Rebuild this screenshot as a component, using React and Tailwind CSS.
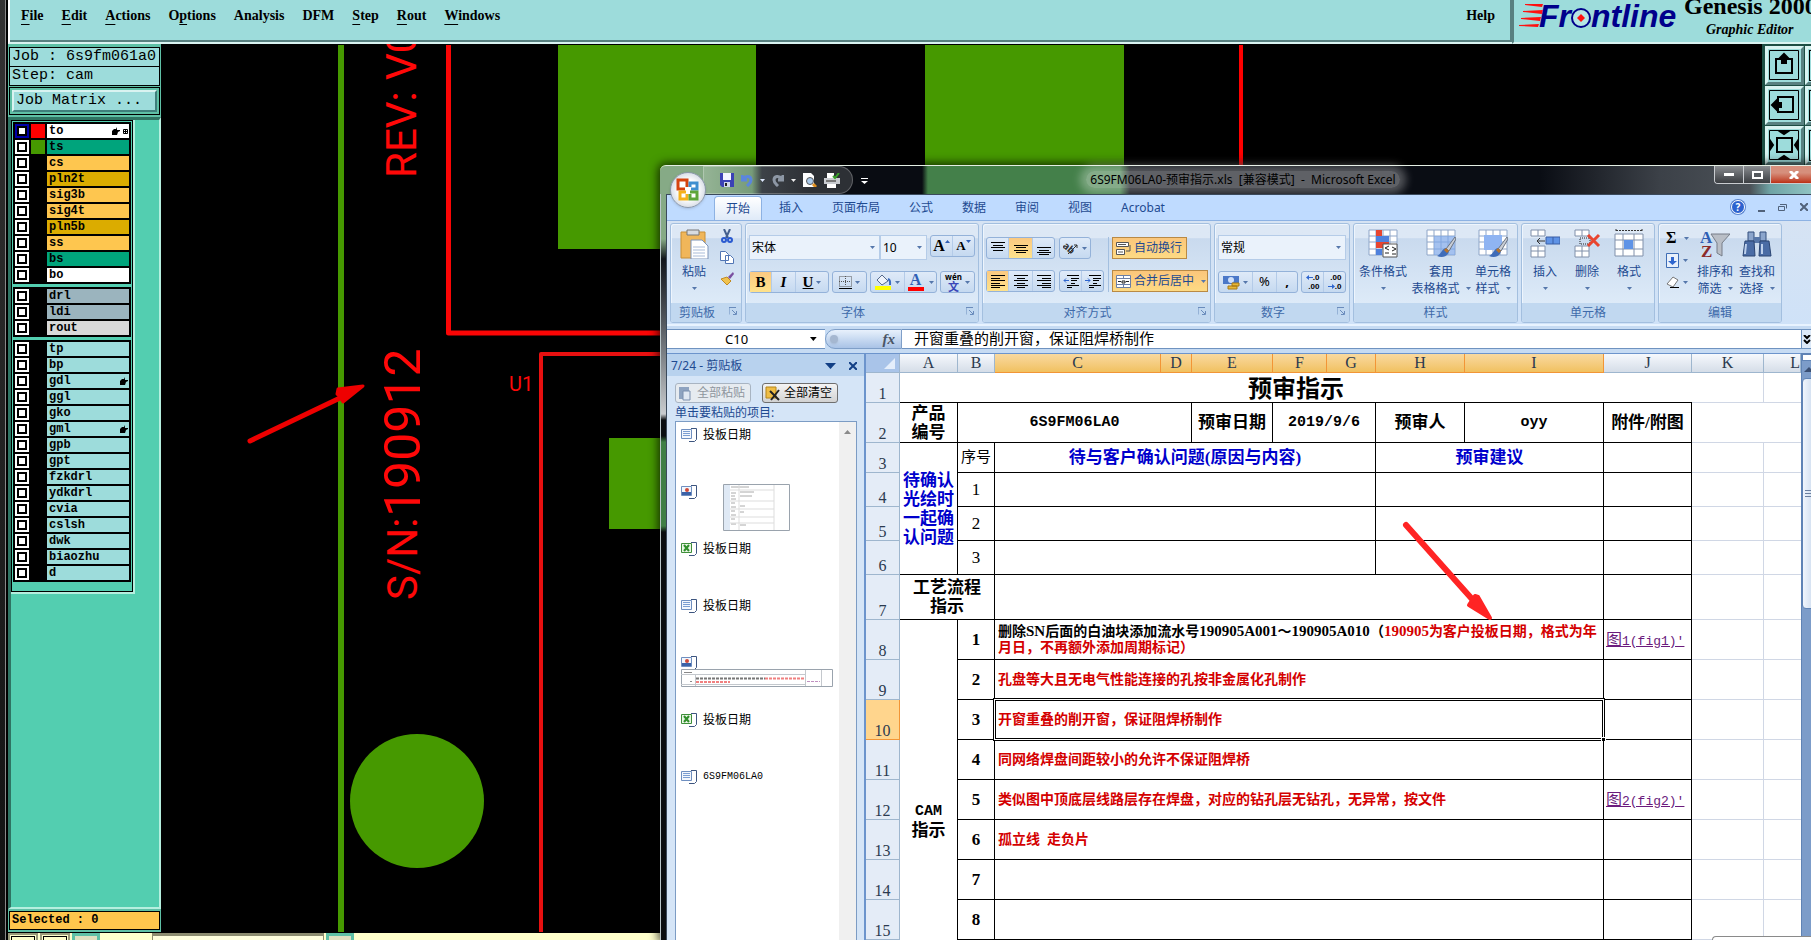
import React from "react";

const layerGroups = [
    [
        { name: "to", bg: "bg-white", swatch: "bg-[#ff0000]", active: true, hand: true, grid: true },
        { name: "ts", bg: "bg-[#00a47c]", swatch: "bg-[#469900]" },
        { name: "cs", bg: "bg-[#fec64f]" },
        { name: "pln2t", bg: "bg-[#dbac00]" },
        { name: "sig3b", bg: "bg-[#fec64f]" },
        { name: "sig4t", bg: "bg-[#fec64f]" },
        { name: "pln5b", bg: "bg-[#dbac00]" },
        { name: "ss", bg: "bg-[#fec64f]" },
        { name: "bs", bg: "bg-[#00a47c]" },
        { name: "bo", bg: "bg-white" },
    ],
    [
        { name: "drl", bg: "bg-[#9bb4be]" },
        { name: "ldi", bg: "bg-[#9bb4be]" },
        { name: "rout", bg: "bg-[#d9d9d9]" },
    ],
    [
        "tp", "bp", "gdl", "ggl", "gko", "gml", "gpb", "gpt", "fzkdrl",
        "ydkdrl", "cvia", "cslsh", "dwk", "biaozhu", "d",
    ].map((name) => ({
        name,
        bg: "bg-[#9ddcdb]",
        hand: name === "gdl" || name === "gml",
    })),
];

const menus = [
    ["", "F", "ile"],
    ["", "E", "dit"],
    ["", "A", "ctions"],
    ["O", "p", "tions"],
    ["Analysis", "", ""],
    ["DFM", "", ""],
    ["", "S", "tep"],
    ["", "R", "out"],
    ["", "W", "indows"],
];

const tabs = ["插入", "页面布局", "公式", "数据", "审阅", "视图"];

/* ---------- graphic editor ---------- */

function FrontlineLogo() {
    return (
        <svg width="165" height="32" className="shrink-0">
            <g fill="#ff1010">
                <path d="M6 4l18 0-1 3-17-2zM4 11l20-1-1 4-19-2zM2 18l20-1-1 4-19-2zM0 25l20-1-1 3-19-1z" />
            </g>
            <g
                fill="#00008b"
                fontFamily="Liberation Sans"
                fontSize="32"
                fontWeight="700"
                fontStyle="italic"
            >
                <text x="20" y="27">Fr</text>
                <text x="72" y="27">ntline</text>
            </g>
            <circle cx="62" cy="18" r="9" fill="#b5e6e4" stroke="#00008b" strokeWidth="2" />
            <path d="M62 14l4 4-4 4-4-4z" fill="#ff1010" />
        </svg>
    );
}

function EditorHeader() {
    return (
        <header className="flex h-11 shrink-0 bg-[#9ddcdb] font-['Liberation_Serif',serif] font-bold text-black">
            <nav className="flex flex-1 gap-[18px] border-l-2 border-b-2 border-l-white border-b-[#d9f3f1] shadow-[inset_-2px_-2px_0_#588080] pl-[11px] pt-[6px] pr-[17px] text-sm">
                {menus.map(([pre, key, rest]) => (
                    <a key={pre + key + rest} href="#menu" className="h-5">
                        {pre}
                        <span className="underline underline-offset-4">{key}</span>
                        {rest}
                    </a>
                ))}
                <a href="#help" className="ml-auto h-5">
                    Help
                </a>
            </nav>
            <div className="flex w-[299px] overflow-hidden border-l-2 border-b-2 border-l-[#588080] border-b-[#d9f3f1] pl-[5px]">
                <FrontlineLogo />
                <div className="-mt-2 flex w-[130px] shrink-0 flex-col whitespace-nowrap">
                    <span className="text-2xl leading-7">Genesis 2000</span>
                    <span className="pl-[22px] text-sm leading-5 italic">Graphic Editor</span>
                </div>
            </div>
        </header>
    );
}

function Hand() {
    return (
        <svg width="8" height="8" viewBox="0 0 8 8" fill="#000">
            <path d="M0 4l2-2 2 0 1-2 0 3 3 0 0 1-2 1-1 3-5 0z" />
        </svg>
    );
}

function LayerRow({ layer }) {
    return (
        <label className="flex h-[14px] gap-[2px]">
            <span
                className={
                    layer.active
                        ? "grid w-[14px] place-items-center bg-[#0000a8]"
                        : "grid w-[14px] place-items-center bg-white"
                }
            >
                <input
                    type="checkbox"
                    className="block h-[10px] w-[10px] appearance-none border-2 border-black bg-white"
                />
            </span>
            <span className={layer.swatch ? `w-[14px] ${layer.swatch}` : "w-[14px]"} />
            <span className={`flex flex-1 items-center gap-[3px] pr-px pl-[2px] leading-[14px] ${layer.bg}`}>
                <span className="flex-1">{layer.name}</span>
                {layer.hand && <Hand />}
                {layer.grid && (
                    <svg width="5" height="5" viewBox="0 0 5 5" fill="none" stroke="#000">
                        <path d="M.5 .5h4v4h-4zM2.5 0v5M0 2.5h5" />
                    </svg>
                )}
            </span>
        </label>
    );
}

function LayerPanel() {
    return (
        <aside className="flex w-[153px] shrink-0 flex-col bg-[#5fc0a6] font-['Liberation_Mono',monospace] text-black">
            <div className="mx-px mt-[3px] h-5 border border-black bg-[#9ddcdb] pl-[2px] text-[15px] leading-[18px] whitespace-pre">
                Job : 6s9fm061a0
            </div>
            <div className="mx-px -mt-px h-5 border border-black bg-[#9ddcdb] pl-[2px] text-[15px] leading-[18px]">
                Step: cam
            </div>
            <div className="mx-px mt-px flex h-7 border border-black p-[2px]">
                <button className="flex-1 border-2 border-t-[#d9f3f1] border-r-[#3f7f7c] border-b-[#3f7f7c] border-l-[#d9f3f1] bg-[#9ddcdb] pl-[2px] text-left text-[15px] leading-[18px]">
                    Job Matrix ...
                </button>
            </div>
            <div className="mt-[2px] min-h-0 flex-1 border-t-[3px] border-r-2 border-b-2 border-l-[3px] border-t-[#2f7463] border-r-[#b5efdf] border-b-[#b5efdf] border-l-[#2f7463] bg-[#53ceb0]">
                <div className="w-[124px] border-r-2 border-b-2 border-[#b5efdf]">
                    <div className="flex flex-col gap-[3px] border border-black p-px pb-[9px] text-xs font-bold">
                        {layerGroups.map((group, i) => (
                            <div key={i} className="flex flex-col gap-[2px] bg-black p-[2px]">
                                {group.map((layer) => (
                                    <LayerRow key={layer.name} layer={layer} />
                                ))}
                            </div>
                        ))}
                    </div>
                </div>
            </div>
            <div className="mx-px my-[2px] h-[19px] border border-black bg-[#ffc64d] pl-[2px] text-xs leading-4 font-bold">
                Selected : 0
            </div>
        </aside>
    );
}

function BoardView() {
    return (
        <svg className="min-w-0 flex-1 bg-black">
            {/* board coordinates start at the window corner */}
            <g transform="translate(-161 -44)">
                <rect x="338" y="45" width="6" height="900" fill="#469900" />
                <rect x="558" y="45" width="198" height="204" fill="#469900" />
                <rect x="925" y="45" width="199" height="204" fill="#469900" />
                <rect x="609" y="438" width="120" height="91" fill="#469900" />
                <circle cx="417" cy="801" r="67" fill="#469900" />
                <path d="M448.500 45V333H700" fill="none" stroke="#fb0505" strokeWidth="5" strokeLinejoin="round" />
                <path d="M541 940V354H700" fill="none" stroke="#e81010" strokeWidth="4" strokeLinejoin="round" />
                <path d="M1241 45V200" stroke="#f00" strokeWidth="4" />
                <g fill="#ff0808" fontFamily="Roboto, sans-serif" fontSize="42">
                    <text transform="translate(416 178) rotate(-90)">REV:</text>
                    <text transform="translate(416 80) rotate(-90)">V0</text>
                    <text transform="translate(417 600) rotate(-90)">S/N:</text>
                    <text fontSize="50" transform="translate(420 517) rotate(-90)">
                        190912
                    </text>
                    <text x="509" y="391" fontSize="20">U1</text>
                </g>
                <g fill="#e00" stroke="#e00" strokeLinecap="round" strokeLinejoin="round">
                    <path d="M250 441L340 398" strokeWidth="5" />
                    <path d="M363 386L338 389 337 394 340 397 343 402z" strokeWidth="3" />
                </g>
            </g>
        </svg>
    );
}

const viewIcons = [
    <g key="up">
        <path d="M11 13h16v14H11z" />
        <path d="M15 12l4-4 4 4h-2v5h-4v-5z" fill="#000" />
    </g>,
    <g key="left">
        <path d="M13 11h15v15H13z" />
        <path d="M11 15l-4 4 4 4v-2h5v-4h-5z" fill="#000" />
    </g>,
    <g key="fit">
        <path d="M12 12h15v14H12z" />
        <path d="M16 6h6l-3 2zM16 32h6l-3-2zM6 16v6l2-3zM32 16v6l-2-3z" fill="#000" />
    </g>,
];

function ViewToolbar() {
    return (
        <div className="grid w-[49px] shrink-0 grid-cols-[39px_39px] content-start gap-px overflow-hidden bg-[#1c4d43] pt-[2px] pl-[3px]">
            {viewIcons.flatMap((icon, i) => [
                <button
                    key={`a${i}`}
                    className="h-[39px] border-3 border-t-[#d9f3f1] border-r-[#588080] border-b-[#588080] border-l-[#d9f3f1] bg-[#9ddcdb]"
                >
                    <svg width="33" height="33" viewBox="3 3 33 33" fill="none" stroke="#000" strokeWidth="2">
                        <path d="M4.500 4.500h29v29h-29z" strokeWidth="1" />
                        {icon}
                    </svg>
                </button>,
                <button
                    key={`b${i}`}
                    className="h-[39px] border-3 border-t-[#d9f3f1] border-r-[#588080] border-b-[#588080] border-l-[#d9f3f1] bg-[#9ddcdb] p-px"
                >
                    <span className="block h-full border border-black" />
                </button>,
            ])}
        </div>
    );
}

function EditorFooter() {
    return (
        <footer className="flex h-2 shrink-0 items-start gap-[2px] overflow-hidden border-t border-black bg-[#ffffcc]">
            <div className="h-3 w-[30px] border-2 border-[#9a9a7a] bg-[#ffffcc] p-px">
                <div className="h-2 border border-black" />
            </div>
            <div className="h-3 w-[30px] border-2 border-[#9a9a7a] bg-[#ffffcc] p-px">
                <div className="h-2 border border-black" />
            </div>
            <div className="h-3 w-7 border-3 border-[#5fc0a6] bg-[#e0e0c0]" />
            <div className="w-12" />
            <div className="h-3 w-[172px] border-x border-t-3 border-[#8c8c70] bg-[#ffffdd]" />
            <div className="h-3 w-7 border-3 border-[#5fc0a6] bg-[#e0e0c0]" />
        </footer>
    );
}

/* ---------- spreadsheet window ---------- */

function Arrow() {
    return (
        <svg width="5" height="3" viewBox="0 0 5 3" fill="#5577ab" className="shrink-0">
            <path d="M0 0h5L2.500 3z" />
        </svg>
    );
}

function OfficeButton() {
    return (
        <button
            aria-label="Office"
            className="absolute top-[7px] left-[10px] grid h-9 w-9 place-items-center rounded-full border border-[#8b98ab] bg-radial from-white from-40% to-[#b9c3d3] shadow"
        >
            <svg width="24" height="24" viewBox="0 0 24 24" fill="none" strokeWidth="3">
                <path d="M11 9V2H2v9h7" stroke="#d6430f" />
                <path d="M14 9V5h7v6h-6" stroke="#3f8fd0" />
                <path d="M10 14H4v7h7v-5" stroke="#f5b21c" />
                <path d="M14 14h7v7h-7v-5" stroke="#5ea63a" />
            </svg>
        </button>
    );
}

function TitleBar() {
    return (
        <div className="flex h-[29px] shrink-0 items-start rounded-tl-md border-t border-[#e4efe4] bg-[linear-gradient(90deg,#86aa86_0,#86aa86_40px,#5f8a62_92px,#1b2128_102px,#090c12_150px,#090c12_262px,#44804a_268px,#44804a_460px,#0a0d14_470px,#0a0d14_880px,#3c4148_1000px,#4b5157_1090px,#6fa3a5_1110px,#8fc2c2_1151px)]">
            <div className="ml-[43px] flex h-7 w-[150px] items-center gap-[7px] rounded-r-full border border-white/25 bg-white/15 pl-4">
                <svg width="14" height="14" viewBox="0 0 14 14">
                    <path d="M0 0h14v14H2L0 12z" fill="#3b41b5" />
                    <path d="M3 0h8v7H3z" fill="#f2f4ff" />
                    <path d="M4 9h6v5H4z" fill="#cfd4ee" />
                    <path d="M5 10h2v3H5z" fill="#222" />
                </svg>
                <svg width="12" height="13" viewBox="0 0 12 13" fill="none" stroke="#5b86dd" strokeWidth="3">
                    <path d="M1 1v5h5M2 5c3-4 8-3 8 1 0 3-2 4-4 6" />
                </svg>
                <svg width="5" height="3" viewBox="0 0 5 3" fill="#dfe9ff"><path d="M0 0h5L2.500 3z" /></svg>
                <svg width="12" height="13" viewBox="0 0 12 13" fill="none" stroke="#8d97a5" strokeWidth="3">
                    <path d="M11 1v5H6M10 5C7 1 2 2 2 6c0 3 2 4 4 6" />
                </svg>
                <svg width="5" height="3" viewBox="0 0 5 3" fill="#eee"><path d="M0 0h5L2.500 3z" /></svg>
                <svg width="14" height="14" viewBox="0 0 14 14">
                    <path d="M0 0h8l3 3v11H0z" fill="#fff" />
                    <circle cx="7" cy="8" r="3.500" fill="#a9c9ea" stroke="#555" />
                    <path d="M10 11l3 3" stroke="#e09020" strokeWidth="3" />
                </svg>
                <svg width="16" height="15" viewBox="0 0 16 15">
                    <path d="M3 0h7v5H3zM3 10h9v5H3z" fill="#fff" />
                    <path d="M0 5h16v6H0z" fill="#c9ccd1" />
                    <path d="M2 7h10v2H2z" fill="#777" />
                    <path d="M9 3l2 2 4-5" stroke="#37a028" strokeWidth="2" fill="none" />
                </svg>
            </div>
            <svg width="7" height="7" viewBox="0 0 7 7" className="mt-3 ml-2" fill="#fff">
                <path d="M0 0h7v1H0zM0 3h7L3.500 6z" />
            </svg>
            <div className="flex-1 pr-24 text-center">
                <span className="rounded-full bg-white/35 px-1 text-xs leading-7 whitespace-pre text-black shadow-[0_0_8px_6px_rgb(255_255_255/0.3)]">
                    6S9FM06LA0-预审指示.xls  [兼容模式]  -  Microsoft Excel
                </span>
            </div>
            <div className="flex h-[18px] w-[97px] shrink-0 overflow-hidden rounded-bl border-b border-l border-[#c9ccd0]">
                <button aria-label="最小化" className="grid w-[29px] place-items-center border-r border-[#c9ccd0] bg-linear-to-b from-[#8a8d91] to-[#3b3e42]">
                    <span className="h-[3px] w-[10px] bg-white" />
                </button>
                <button aria-label="最大化" className="grid w-[27px] place-items-center border-r border-[#c9ccd0] bg-linear-to-b from-[#8a8d91] to-[#3b3e42]">
                    <span className="h-2 w-[11px] border-2 border-white bg-[#55595e]" />
                </button>
                <button aria-label="关闭" className="flex-1 bg-linear-to-b from-[#d68f7c] from-40% to-[#bb2e12] pl-[18px]">
                    <svg width="10" height="8" viewBox="0 0 10 8" className="stroke-white" strokeWidth="3">
                        <path d="M1 0l8 8M9 0L1 8" />
                    </svg>
                </button>
            </div>
        </div>
    );
}

function TabStrip() {
    return (
        <div className="flex h-[26px] shrink-0 items-end border-t border-[#3b4a5c] bg-[#bfdbff] pr-[3px] text-xs text-[#1e4a91]">
            <button className="ml-[47px] h-6 w-12 rounded-t border border-b-0 border-[#8db2e3] bg-linear-to-b from-white to-[#dfeaf8]">
                开始
            </button>
            <div className="ml-[17px] flex h-6 items-center gap-[29px]">
                {tabs.map((tab) => (
                    <button key={tab}>{tab}</button>
                ))}
                <button>Acrobat</button>
            </div>
            <div className="ml-auto flex h-[26px] items-center gap-[13px] text-[#51627a]">
                <span className="grid h-[14px] w-[14px] place-items-center rounded-full border border-white bg-[#2c62cf] text-[10px] leading-3 font-bold text-white ring-1 ring-[#5a84cf]">
                    ?
                </span>
                <span className="mt-2 h-[2px] w-[7px] bg-[#51627a]" />
                <svg width="9" height="7" viewBox="0 0 9 7" fill="none" stroke="currentColor">
                    <path d="M.5 2.500h6v4h-6zM2 .5h6.500v4" />
                </svg>
                <svg width="8" height="8" viewBox="0 0 8 8" stroke="currentColor" strokeWidth="2">
                    <path d="M0 0l8 8M8 0L0 8" />
                </svg>
            </div>
        </div>
    );
}

function Group({ label, className, launcher, children }) {
    return (
        <section
            className={`flex shrink-0 flex-col overflow-hidden rounded-[3px] border border-[#a3bfdf] bg-linear-to-b from-[#dde8f5] from-14% via-[#c9daee] via-15% to-[#e3effb] shadow-[inset_1px_1px_0_#eef5fd] ${className}`}
        >
            <div className="min-h-0 flex-1">{children}</div>
            <div className="flex h-[19px] items-center bg-[#c1d8f0] pt-px text-xs text-[#3e6aaa]">
                <span className={launcher ? "flex-1 pr-[6px] text-center" : "flex-1 text-center"}>{label}</span>
                {launcher && (
                    <svg width="8" height="8" viewBox="0 0 8 8" fill="none" stroke="#6a8cbc" className="mr-1 mb-1">
                        <path d="M0 7.500V.5h7M3 3l4 4M7.500 4v3.500H4" />
                    </svg>
                )}
            </div>
        </section>
    );
}

function Cluster({ className = "", children }) {
    return (
        <div
            className={`flex h-[22px] rounded-[3px] border border-[#94b2d9] bg-linear-to-b from-[#dfeaf8] to-[#c5d9f0] ${className}`}
        >
            {children}
        </div>
    );
}

function Tool({ on, label, className = "w-6", children }) {
    return (
        <button
            aria-label={label}
            className={[
                "flex items-center justify-center gap-[3px] border-r border-[#b4cbe8] text-black last:border-r-0",
                on && "bg-linear-to-b from-[#fbc981] to-[#fee28b]",
                className,
            ]
                .filter(Boolean)
                .join(" ")}
        >
            {children}
        </button>
    );
}

function Lines({ d }) {
    return (
        <svg width="16" height="13" viewBox="0 0 16 13" stroke="#000" strokeWidth="1">
            <path d={d} />
        </svg>
    );
}

const alignTop = "M1 .5h14M3 3.500h10M1 5.500h14M3 8.500h10";
const alignMiddle = "M1 3.500h14M3 5.500h10M1 8.500h14M3 10.500h10";
const alignBottom = "M1 5.500h14M3 8.500h10M1 10.500h14M3 12.500h10";
const alignLeft = "M1 .5h14M1 3.500h9M1 5.500h14M1 8.500h9M1 10.500h14M1 12.500h9";
const alignCenter = "M1 .5h14M4 3.500h8M1 5.500h14M4 8.500h8M1 10.500h14M4 12.500h8";
const alignRight = "M1 .5h14M6 3.500h9M1 5.500h14M6 8.500h9M1 10.500h14M6 12.500h9";

function Combo({ value, label, className }) {
    return (
        <label className={`flex h-[25px] items-center border border-[#b5cce8] bg-[#eaf2fb] pr-1 ${className}`}>
            <select aria-label={label} className="h-full min-w-0 flex-1 appearance-none pl-[2px] text-xs text-black">
                <option>{value}</option>
            </select>
            <Arrow />
        </label>
    );
}

function BigButton({ icon, lines, className = "w-[42px]" }) {
    return (
        <button className={`flex flex-col items-center text-xs leading-[17px] whitespace-nowrap text-[#1e4a91] ${className}`}>
            <svg width="30" height="30" viewBox="0 0 30 30" className="mb-1">
                {icon}
            </svg>
            <span>{lines[0]}</span>
            <span className="flex h-[17px] items-center gap-[6px]">
                {lines[1]}
                <Arrow />
            </span>
        </button>
    );
}

const sheetGrid = (
    <path d="M1 1h28v25H1zM1 7h28M1 13h28M1 20h28M8 1v25M15 1v25M22 1v25" fill="#fff" stroke="#8fa6c8" />
);
const brush = (
    <>
        <path d="M29 8l-9 12 3 2 7-12z" fill="#c9ced6" stroke="#6a7482" />
        <path d="M20 19c-5 1-4 6-9 8 5 2 11 1 12-5z" fill="#3f6cb8" />
        <path d="M19 20l3 3" stroke="#b8742a" strokeWidth="3" />
    </>
);
const icons = {
    conditional: (
        <>
            {sheetGrid}
            <path d="M8 1h6v6H8zM8 13h13v6H8z" fill="#e8452f" />
            <path d="M8 7h13v6H8zM8 20h6v6H8z" fill="#4f81dd" />
            <path d="M15 15h14v13H15z" fill="#fff" stroke="#555" />
            <path d="M21 17l-4 2 4 2M17 24h4M24 18l4 2-4 2M24 25h4" stroke="#222" fill="none" />
        </>
    ),
    tableFormat: (
        <>
            {sheetGrid}
            <path d="M8 7h21v19H8z" fill="#7ea6e8" fillOpacity=".7" />
            {brush}
        </>
    ),
    cellStyle: (
        <>
            {sheetGrid}
            <path d="M6 6h18v15H6z" fill="#8fb4f2" />
            {brush}
        </>
    ),
    insert: (
        <>
            <path d="M1 1h14v6H1zM8 1v6M1 17h14v11H1zM8 17v11M1 22h14" fill="#fff" stroke="#8090aa" />
            <path d="M16 8h14v7H16zM23 8v7" fill="#5f93e6" stroke="#3a5fa5" />
            <path d="M7 12h8M10 9l-3 3 3 3" stroke="#333" fill="none" />
        </>
    ),
    remove: (
        <>
            <path d="M3 1h14v6H3zM10 1v6M3 17h14v11H3zM10 17v11M3 22h14" fill="#fff" stroke="#8090aa" />
            <path d="M8 9h10v6H8z" fill="none" stroke="#222" strokeDasharray="1 1" />
            <path d="M16 6l11 11M27 6L16 17" stroke="#e8452f" strokeWidth="3" />
        </>
    ),
    format: (
        <>
            <path d="M1 5h28v22H1zM1 11h28M1 20h28M9 5v22M20 5v22" fill="#fff" stroke="#8090aa" />
            <path d="M10 11h9v9h-9z" fill="#5f93e6" />
            <path d="M2 1.500h26M2 0v3M28 0v3" stroke="#333" strokeDasharray="2 1" />
        </>
    ),
    sort: (
        <>
            <text x="0" y="14" fontFamily="Liberation Serif" fontSize="17" fontWeight="700" fill="#2f5fb5">A</text>
            <text x="1" y="28" fontFamily="Liberation Serif" fontSize="17" fontWeight="700" fill="#8c2b2b">Z</text>
            <path d="M11 5h19l-8 9v13l-5-3V14z" fill="#b9bec6" stroke="#767d88" />
        </>
    ),
    find: (
        <>
            <path d="M6 3h6v9H6zM18 3h6v9h-6z" fill="#8ba5cc" stroke="#334e7d" />
            <path d="M12 8h6v6h-6z" fill="#5777a9" />
            <path d="M3 12h9l1 15H1zM18 12h9l2 15H17z" fill="#4a6ca5" stroke="#2b4572" />
            <path d="M4 15l-1 10M20 15v10" stroke="#bdd0ec" strokeWidth="2" />
        </>
    ),
    paste: (
        <>
            <path d="M2 3h24v26H2z" fill="#f0b65a" stroke="#c98f35" />
            <path d="M8 1h12v5H8z" fill="#d8dbe0" stroke="#777" />
            <path d="M12 11h11l6 6v13H12z" fill="#fff" stroke="#7c93b8" />
            <path d="M14 18h12M14 21h12M14 24h12M14 27h12" stroke="#a9bbd8" />
        </>
    ),
};

function Ribbon() {
    return (
        <div className="flex h-[106px] shrink-0 gap-[3px] border-t border-[#8db2e3] bg-linear-to-b from-[#d6e3f3] to-[#cfe2f8] pt-[2px] pb-[3px] pl-[3px] shadow-[inset_0_-2px_0_#e8f3ff]">
            <Group label="剪贴板" className="w-[72px]" launcher>
                <div className="flex gap-3 pt-[5px] pl-[9px]">
                    <BigButton icon={icons.paste} lines={["粘贴", ""]} className="w-7" />
                    <div className="flex flex-col gap-2 text-[#3f63a8]">
                        <svg width="14" height="14" viewBox="0 0 14 14" fill="none" stroke="#46618f" strokeWidth="2">
                            <path d="M4 0l4 9M10 0L6 9" />
                            <circle cx="4" cy="11" r="2" stroke="#2a5ad0" />
                            <circle cx="10" cy="11" r="2" stroke="#2a5ad0" />
                        </svg>
                        <svg width="14" height="13" viewBox="0 0 14 13" fill="#fff" stroke="#5276b5">
                            <path d="M.5 .5h5l3 3v6h-8zM5.500 4.500h5l3 3v5h-8z" />
                        </svg>
                        <svg width="14" height="14" viewBox="0 0 14 14">
                            <path d="M13 0L8 5l2 2 4-5z" fill="#7a4fa0" />
                            <path d="M1 7l6-2 4 4-4 4z" fill="#f0c24e" stroke="#c18a22" />
                        </svg>
                    </div>
                </div>
            </Group>

            <Group label="字体" className="w-[234px]" launcher>
                <div className="flex flex-col gap-[11px] px-[3px] pt-[11px]">
                    <div className="flex">
                        <Combo label="字体" value="宋体" className="w-[131px]" />
                        <Combo label="字号" value="10" className="w-[47px]" />
                        <Cluster className="ml-auto w-[45px] font-['Liberation_Serif',serif] font-bold">
                            <Tool className="w-[22px] text-base" label="增大字号">
                                A
                                <svg width="5" height="12" viewBox="0 0 5 12" fill="#2f5fb5" className="-ml-[3px]"><path d="M0 3h5L2.500 0z" /></svg>
                            </Tool>
                            <Tool className="w-[21px] text-[13px]" label="减小字号">
                                A
                                <svg width="5" height="12" viewBox="0 0 5 12" fill="#2f5fb5" className="-ml-[3px]"><path d="M0 0h5L2.500 3z" /></svg>
                            </Tool>
                        </Cluster>
                    </div>
                    <div className="flex justify-between font-['Liberation_Serif',serif] text-[15px]">
                        <Cluster className="w-20">
                            <Tool on className="w-[22px] font-bold" label="加粗">B</Tool>
                            <Tool className="w-6 font-bold italic" label="倾斜">I</Tool>
                            <Tool className="flex-1 gap-2 font-bold" label="下划线"><span className="underline">U</span><Arrow /></Tool>
                        </Cluster>
                        <Cluster className="w-[35px]">
                            <Tool className="flex-1 gap-2" label="边框">
                                <svg width="13" height="13" viewBox="0 0 13 13" fill="none" stroke="#555">
                                    <path d="M.5 .5h12v10H.5zM6.500 0v10M0 5.500h12" strokeDasharray="1 1" />
                                    <path d="M0 12.500h13" stroke="#000" />
                                </svg>
                                <Arrow />
                            </Tool>
                        </Cluster>
                        <Cluster className="w-[67px]">
                            <Tool className="w-[34px]" label="填充颜色">
                                <svg width="17" height="16" viewBox="0 0 17 16">
                                    <path d="M7 1l6 6-6 4-5-5z" fill="#eef3fb" stroke="#556a8c" />
                                    <path d="M13 5c3 1 2 4 2 6" stroke="#3b6cc0" strokeWidth="2" fill="none" />
                                    <path d="M0 12h16v4H0z" fill="#ffff00" />
                                </svg>
                                <Arrow />
                            </Tool>
                            <Tool className="flex-1 gap-[5px]" label="字体颜色">
                                <span className="w-4 border-b-4 border-[#ff0000] text-base leading-[14px] font-bold text-[#2f5fb5]">A</span>
                                <Arrow />
                            </Tool>
                        </Cluster>
                        <Cluster className="w-[35px]">
                            <Tool className="flex-1" label="拼音">
                                <span className="flex flex-col items-center font-['Noto_Sans','Noto_Sans_CJK_SC',sans-serif] text-[8px] leading-[8px] font-bold">
                                    wén
                                    <span className="text-[11px] leading-[11px] text-[#3a46b8]">文</span>
                                </span>
                                <Arrow />
                            </Tool>
                        </Cluster>
                    </div>
                </div>
            </Group>

            <Group label="对齐方式" className="w-[229px]" launcher>
                <div className="flex px-[3px] pt-[13px]">
                    <div className="flex flex-col gap-[11px]">
                        <div className="flex gap-1">
                            <Cluster className="w-[69px]">
                                <Tool className="w-[22px]" label="顶端对齐"><Lines d={alignTop} /></Tool>
                                <Tool on label="垂直居中"><Lines d={alignMiddle} /></Tool>
                                <Tool className="flex-1" label="底端对齐"><Lines d={alignBottom} /></Tool>
                            </Cluster>
                            <Cluster className="w-8">
                                <Tool className="flex-1" label="方向">
                                    <svg width="16" height="14" viewBox="0 0 16 14" fill="none" stroke="#333">
                                        <path d="M5 13L14 4M11 4h3v3" />
                                        <text x="0" y="9" fontSize="10" fontWeight="700" fill="#333" stroke="none" transform="rotate(40 4 6)">ab</text>
                                    </svg>
                                    <Arrow />
                                </Tool>
                            </Cluster>
                        </div>
                        <div className="flex gap-1">
                            <Cluster className="w-[69px]">
                                <Tool on className="w-[22px]" label="左对齐"><Lines d={alignLeft} /></Tool>
                                <Tool label="居中"><Lines d={alignCenter} /></Tool>
                                <Tool className="flex-1" label="右对齐"><Lines d={alignRight} /></Tool>
                            </Cluster>
                            <Cluster className="w-[45px]">
                                <Tool className="w-[22px]" label="减少缩进">
                                    <svg width="16" height="13" viewBox="0 0 16 13" fill="none" stroke="#000">
                                        <path d="M4 .5h12M8 3.500h8M8 5.500h6M8 8.500h4M4 10.500h12M4 12.500h5" />
                                        <path d="M1 5.500h5M3 3.500l-2 2 2 2" stroke="#2f66cf" />
                                    </svg>
                                </Tool>
                                <Tool className="flex-1" label="增加缩进">
                                    <svg width="16" height="13" viewBox="0 0 16 13" fill="none" stroke="#000">
                                        <path d="M4 .5h12M8 3.500h8M8 5.500h6M8 8.500h4M4 10.500h12M4 12.500h5" />
                                        <path d="M0 5.500h5M3 3.500l2 2-2 2" stroke="#2f66cf" />
                                    </svg>
                                </Tool>
                            </Cluster>
                        </div>
                    </div>
                    <div className="mr-[3px] ml-1 border-r border-[#a3bfdf]" />
                    <div className="flex flex-col gap-[11px] text-xs whitespace-nowrap text-[#1e4a91]">
                        <button className="flex h-[22px] w-[75px] items-center gap-[3px] border border-[#b98a45] bg-linear-to-b from-[#fbc67b] to-[#fdda84] pl-[3px]">
                            <svg width="15" height="15" viewBox="0 0 15 15" fill="none" stroke="#555">
                                <path d="M.5 1.500h12v4H.5zM.5 8.500h8v5h-8z" fill="#fff" />
                                <path d="M2 3.500h8M2 11h5M14 4v6h-4" />
                            </svg>
                            自动换行
                        </button>
                        <button className="flex h-[22px] w-24 items-center gap-[3px] border border-[#b98a45] bg-linear-to-b from-[#fbc67b] to-[#fdda84] pl-[3px]">
                            <svg width="15" height="13" viewBox="0 0 15 13" fill="#fff" stroke="#6b7fa5">
                                <path d="M.5 .5h14v12H.5zM.5 3.500h14M.5 9.500h14M7.500 .5v3M7.500 9.500v3" />
                                <path d="M2 6.500h3M10 6.500h3M6 6h3v2H6z" stroke="#222" />
                            </svg>
                            <span className="mr-1">合并后居中</span>
                            <Arrow />
                        </button>
                    </div>
                </div>
            </Group>

            <Group label="数字" className="w-[136px]" launcher>
                <div className="flex flex-col gap-[11px] px-[3px] pt-[11px]">
                    <Combo label="数字格式" value="常规" className="w-32" />
                    <div className="flex justify-between text-[13px]">
                        <Cluster className="w-20">
                            <Tool className="w-[34px]" label="会计数字格式">
                                <svg width="17" height="15" viewBox="0 0 17 15">
                                    <path d="M0 1h16v8H0z" fill="#4b78c8" />
                                    <circle cx="8" cy="5" r="3" fill="#cfe0fa" />
                                    <path d="M9 8h7v3H9zM5 11h9v3H5z" fill="#e8b83a" stroke="#a97a12" />
                                </svg>
                                <Arrow />
                            </Tool>
                            <Tool label="百分比">%</Tool>
                            <Tool className="flex-1 font-bold" label="千位分隔">,</Tool>
                        </Cluster>
                        <Cluster className="w-[45px] font-['Liberation_Sans',sans-serif] text-[8px] leading-[9px] font-bold">
                            <Tool className="w-[22px]" label="增加小数位">
                                <span className="flex flex-col items-end">
                                    <span className="flex items-center">
                                        <svg width="7" height="5" viewBox="0 0 7 5" fill="#2f66cf"><path d="M0 2.500L3 0v2h4v1H3v2z" /></svg>
                                        .0
                                    </span>
                                    <span>.00</span>
                                </span>
                            </Tool>
                            <Tool className="flex-1" label="减少小数位">
                                <span className="flex flex-col items-end">
                                    <span>.00</span>
                                    <span className="flex items-center">
                                        <svg width="7" height="5" viewBox="0 0 7 5" fill="#2f66cf"><path d="M7 2.500L4 0v2H0v1h4v2z" /></svg>
                                        .0
                                    </span>
                                </span>
                            </Tool>
                        </Cluster>
                    </div>
                </div>
            </Group>

            <Group label="样式" className="w-[165px]">
                <div className="flex pt-[5px]">
                    <BigButton icon={icons.conditional} lines={["条件格式", ""]} className="w-[58px]" />
                    <BigButton icon={icons.tableFormat} lines={["套用", "表格格式"]} className="w-[58px]" />
                    <BigButton icon={icons.cellStyle} lines={["单元格", "样式"]} className="w-[46px]" />
                </div>
            </Group>
            <Group label="单元格" className="w-[134px]">
                <div className="flex pt-[5px] pl-[2px]">
                    <BigButton icon={icons.insert} lines={["插入", ""]} />
                    <BigButton icon={icons.remove} lines={["删除", ""]} />
                    <BigButton icon={icons.format} lines={["格式", ""]} />
                </div>
            </Group>
            <Group label="编辑" className="w-[124px]">
                <div className="flex pt-[5px] pl-[7px]">
                    <div className="flex w-7 flex-col gap-1">
                        <button className="flex h-[18px] items-center gap-2 font-['Liberation_Serif',serif] text-base font-bold text-black">Σ<Arrow /></button>
                        <button aria-label="填充" className="flex h-[18px] items-center gap-1">
                            <svg width="13" height="15" viewBox="0 0 13 15">
                                <path d="M.5 .5h12v14H.5z" fill="#e8f0fb" stroke="#3e6db5" />
                                <path d="M5 4h3v4h3l-4.500 4L2 8h3z" fill="#2f66cf" />
                            </svg>
                            <Arrow />
                        </button>
                        <button aria-label="清除" className="flex h-[18px] items-center gap-1">
                            <svg width="13" height="12" viewBox="0 0 13 12">
                                <path d="M1 8l6-7 5 3-5 7z" fill="#fff" stroke="#777" />
                                <path d="M4 11.500h9" stroke="#000" />
                            </svg>
                            <Arrow />
                        </button>
                    </div>
                    <BigButton icon={icons.sort} lines={["排序和", "筛选"]} />
                    <BigButton icon={icons.find} lines={["查找和", "选择"]} />
                </div>
            </Group>
        </div>
    );
}

function FormulaBar() {
    return (
        <div className="flex h-[27px] shrink-0 bg-[#c6dbf3] pt-[3px] pb-1 font-['Liberation_Serif','Noto_Sans_CJK_SC',serif] text-[15px] text-black">
            <div className="flex w-[158px] items-center border-y border-[#6f93c0] bg-white pr-2">
                <input aria-label="名称框" defaultValue="C10" className="w-full min-w-0 pr-1 text-center font-['Noto_Sans',sans-serif] text-[13px] leading-4" />
                <svg width="7" height="4" viewBox="0 0 7 4"><path d="M0 0h7L3.500 4z" /></svg>
            </div>
            <div className="flex w-[77px] items-center justify-between rounded-l-full border border-[#7f9fc8] bg-linear-to-b from-[#e8f1fc] to-[#a9c3e6] pr-[6px] pl-1">
                <span className="h-2 w-2 rounded-full bg-[#a5b7d0] shadow" />
                <span className="leading-4 font-bold text-[#4a5565] italic">fx</span>
            </div>
            <input
                aria-label="编辑栏"
                defaultValue="开窗重叠的削开窗，保证阻焊桥制作"
                className="min-w-0 flex-1 border-y border-[#6f93c0] bg-white pl-3 leading-[18px]"
            />
            <button aria-label="展开编辑栏" className="w-[10px] overflow-hidden border border-r-0 border-[#6f93c0] bg-[#dce9f8] pl-px">
                <svg width="9" height="9" viewBox="0 0 9 9" fill="none" stroke="#000" strokeWidth="2">
                    <path d="M1 0l3 3 3-3M1 5l3 3 3-3" />
                </svg>
            </button>
        </div>
    );
}

function ClipIcon({ kind }) {
    return (
        <svg width="17" height="16" viewBox="0 0 17 16" className="shrink-0">
            <path d="M10 1.500h5.500v11l-2 2H8" fill="#fff" stroke="#3d557f" />
            <path
                d="M.5 2.500h10v9H.5z"
                fill={kind === "sheet" ? "#eaf6e6" : "#f3f7fd"}
                stroke={kind === "sheet" ? "#3f8f3a" : "#6f8fc0"}
            />
            {kind === "text" && <path d="M2 4.500h7M2 6.500h7M2 8.500h7" stroke="#7b9ed2" />}
            {kind === "sheet" && <path d="M3 4l5 6M8 4l-5 6" stroke="#2f8f2a" strokeWidth="2" />}
            {kind === "picture" && (
                <>
                    <path d="M1 8h9v3H1z" fill="#3b62a8" />
                    <circle cx="6" cy="6" r="2" fill="#cf4a3a" />
                </>
            )}
        </svg>
    );
}

const clips = [
    { kind: "text", text: "投板日期" },
    { kind: "picture", thumb: "page" },
    { kind: "sheet", text: "投板日期" },
    { kind: "text", text: "投板日期" },
    { kind: "picture", thumb: "row" },
    { kind: "sheet", text: "投板日期" },
    { kind: "text", text: "6S9FM06LA0", mono: true },
];

function ClipItem({ clip }) {
    return (
        <li className="relative flex h-[57px] items-start gap-[5px] text-xs leading-4">
            <ClipIcon kind={clip.kind} />
            {clip.mono ? (
                <span className="font-['Liberation_Mono',monospace] text-[10px]">{clip.text}</span>
            ) : (
                clip.text && <span>{clip.text}</span>
            )}
            {clip.thumb === "page" && (
                <svg width="67" height="47" viewBox="0 0 67 47" className="ml-5">
                    <path d="M.5 .5h66v46H.5z" fill="#fff" stroke="#9aa3ad" />
                    <path d="M1 1h6v45H1z" fill="#dfe9f5" />
                    <path d="M8 3h18M8 9h5M8 12h4M8 15h5M8 19h4M8 23h5M8 27h4M8 31h5M8 35h4M8 40h5M17 8h14M17 12h12M17 22h5M17 28h4M17 41h6" stroke="#aaa" />
                    <path d="M16 1v45M51 1v45M7 6h44M7 17h44M7 25h44M7 33h44M7 39h44" stroke="#ddd" />
                </svg>
            )}
            {clip.thumb === "row" && (
                <svg width="152" height="18" viewBox="0 0 152 18" className="absolute top-[14px] left-0">
                    <path d="M.5 .5h151v17H.5z" fill="#fff" stroke="#9aa3ad" />
                    <path d="M14.500 5v12M124.500 1v16M140.500 1v16M0 5.500h124M0 15.500h124" stroke="#c4c8cd" />
                    <path d="M15 9.500h69" stroke="#777" strokeWidth="2" strokeDasharray="3 1" />
                    <path d="M84 9.500h39M15 13h34" stroke="#f08080" strokeWidth="2" strokeDasharray="3 1" />
                    <path d="M126 12.500h13" stroke="#c090c0" strokeDasharray="3 1" />
                    <path d="M3 3.500h8M9 12.500h2" stroke="#888" />
                </svg>
            )}
        </li>
    );
}

function ClipboardPane() {
    return (
        <aside className="flex w-[199px] shrink-0 flex-col border-t border-r-2 border-[#6c94cc] bg-[#d5e5f7] text-xs">
            <div className="flex h-[22px] items-center gap-[13px] bg-[#b8d2ee] pt-px pr-[7px] pl-1 text-[#1e4a91]">
                <h2 className="flex-1">7/24 - 剪贴板</h2>
                <svg width="11" height="6" viewBox="0 0 11 6" fill="#123f85"><path d="M0 0h11L5.500 6z" /></svg>
                <svg width="8" height="8" viewBox="0 0 8 8" stroke="#123f85" strokeWidth="2"><path d="M0 0l8 8M8 0L0 8" /></svg>
            </div>
            <div className="mt-[7px] flex gap-[11px] pl-2">
                <button disabled className="flex h-5 w-[76px] items-center gap-1 rounded-[3px] border border-[#a8b4c2] bg-[#e6ebf0] pl-[2px] whitespace-nowrap text-[#8f969e]">
                    <svg width="15" height="15" viewBox="0 0 15 15">
                        <path d="M1 1h10v12H1z" fill="#8ea3c0" />
                        <path d="M5 5h7v9H5z" fill="#dfe7f2" stroke="#7b8fae" />
                    </svg>
                    全部粘贴
                </button>
                <button className="flex h-5 w-[76px] items-center gap-1 rounded-[3px] border border-[#6f6f6f] bg-linear-to-b from-[#f4f4f4] to-[#d2d2d2] pl-[2px] whitespace-nowrap text-black">
                    <svg width="15" height="15" viewBox="0 0 15 15">
                        <path d="M1 1h10v11H1z" fill="#efbd45" stroke="#b68618" />
                        <path d="M5 5l9 9M14 4L6 14" stroke="#222" strokeWidth="2" />
                    </svg>
                    全部清空
                </button>
            </div>
            <p className="mt-[2px] pl-2 leading-4 text-[#1e4a91]">单击要粘贴的项目:</p>
            <div className="mr-[7px] ml-2 flex min-h-0 flex-1 overflow-hidden border border-b-0 border-[#7c9cc4] bg-white">
                <ul className="flex-1 pt-[5px] pl-[5px] text-black">
                    {clips.map((clip, i) => (
                        <ClipItem key={i} clip={clip} />
                    ))}
                </ul>
                <div className="w-[17px] bg-[#f0f0f0] pt-2 pl-[5px]">
                    <svg width="7" height="4" viewBox="0 0 7 4" fill="#8a8a8a"><path d="M0 4h7L3.500 0z" /></svg>
                </div>
            </div>
        </aside>
    );
}

/* ---------- worksheet ---------- */

const columns = [
    ["A", "w-[58px]"],
    ["B", "w-[37px]"],
    ["C", "w-[166px]", true],
    ["D", "w-[31px]", true],
    ["E", "w-[81px]", true],
    ["F", "w-[54px]", true],
    ["G", "w-[49px]", true],
    ["H", "w-[89px]", true],
    ["I", "w-[139px]", true],
    ["J", "w-[88px]"],
    ["K", "w-[72px]"],
    ["L", "text-right"],
];

const instructions = [
    {
        row: 8,
        body: (
            <>
                <span className="text-black">
                    删除<Latin>SN</Latin>后面的白油块添加流水号<Latin>190905A001</Latin>～<Latin>190905A010</Latin>（
                </span>
                <Latin>190905</Latin>为客户投板日期，格式为年
                <br />
                月日，不再额外添加周期标记）
            </>
        ),
        link: "1(fig1)'",
    },
    { row: 9, body: "孔盘等大且无电气性能连接的孔按非金属化孔制作" },
    { row: 10, body: "开窗重叠的削开窗，保证阻焊桥制作", selected: true },
    { row: 11, body: "同网络焊盘间距较小的允许不保证阻焊桥" },
    { row: 12, body: "类似图中顶底层线路层存在焊盘，对应的钻孔层无钻孔，无异常，按文件", link: "2(fig2)'" },
    { row: 13, body: "孤立线  走负片" },
    { row: 14 },
    { row: 15 },
    { row: 16 },
    { row: 17 },
];

function Latin({ children }) {
    return <span className="text-[15px]">{children}</span>;
}

function Cell({ className = "", ...props }) {
    return <td className={`border-r border-b border-black ${className}`} {...props} />;
}

function RowHead({ n, selected }) {
    return (
        <th
            scope="row"
            className={[
                "border-r border-b p-0 align-bottom text-base leading-4 font-normal text-[#2b3a4f]",
                selected ? "border-[#f29536] bg-[#ffd58d]" : "border-[#9eb6ce] bg-[#e4ecf7]",
            ].join(" ")}
        >
            {n}
        </th>
    );
}

function Blank() {
    return (
        <>
            <td className="border-r border-b border-[#d0d7e5]" />
            <td className="border-b border-[#d0d7e5]" />
        </>
    );
}

function Worksheet() {
    return (
        <div className="relative min-w-0 flex-1 overflow-hidden border-t border-[#6c94cc] bg-white">
            <table className="w-full table-fixed border-separate border-spacing-0 font-['Liberation_Serif','Noto_Sans_CJK_SC',serif] text-[17px] leading-[19px] text-black">
                <thead>
                    <tr className="h-[19px] text-base leading-[18px] text-[#2b3a4f]">
                        <th className="w-[34px] border-r border-b border-[#9eb6ce] bg-[#a9c4e9] p-0">
                            <svg width="11" height="11" viewBox="0 0 11 11" fill="#e4eefb" className="ml-auto mr-1"><path d="M11 0v11H0z" /></svg>
                        </th>
                        {columns.map(([name, width, selected]) => (
                            <th
                                key={name}
                                scope="col"
                                className={[
                                    "border-r border-b bg-linear-to-b p-0 font-normal",
                                    selected
                                        ? "border-[#f29536] from-[#f9d99f] to-[#f1c15f]"
                                        : "border-[#9eb6ce] from-[#f6f9fd] to-[#d5dde8]",
                                    width,
                                ].join(" ")}
                            >
                                {name}
                            </th>
                        ))}
                    </tr>
                </thead>
                <tbody className="text-center font-bold [&_td]:p-0">
                    <tr className="h-[30px]">
                        <RowHead n={1} />
                        <td colSpan={10} className="border-b border-black align-bottom text-2xl leading-[26px]">
                            预审指示
                        </td>
                        <Blank />
                    </tr>
                    <tr className="h-10">
                        <RowHead n={2} />
                        <Cell>产品<br />编号</Cell>
                        <Cell colSpan={3} className="font-['Liberation_Mono',monospace] text-[15px]">6S9FM06LA0</Cell>
                        <Cell>预审日期</Cell>
                        <Cell colSpan={2} className="font-['Liberation_Mono',monospace] text-[15px]">2019/9/6</Cell>
                        <Cell>预审人</Cell>
                        <Cell className="font-['Liberation_Mono',monospace] text-[15px]">oyy</Cell>
                        <Cell>附件/附图</Cell>
                        <td colSpan={2} className="border-b border-[#d0d7e5]" />
                    </tr>
                    <tr className="h-[30px]">
                        <RowHead n={3} />
                        <Cell rowSpan={4} className="text-[#0000cc]">
                            待确认<br />光绘时<br />一起确<br />认问题
                        </Cell>
                        <Cell className="text-[15px] font-normal">序号</Cell>
                        <Cell colSpan={5} className="text-[#0000cc]">待与客户确认问题(原因与内容)</Cell>
                        <Cell colSpan={2} className="text-[#0000cc]">预审建议</Cell>
                        <Cell />
                        <Blank />
                    </tr>
                    {[1, 2, 3].map((n) => (
                        <tr key={n} className="h-[34px]">
                            <RowHead n={n + 3} />
                            <Cell className="font-normal">{n}</Cell>
                            <Cell colSpan={5} />
                            <Cell colSpan={2} />
                            <Cell />
                            <Blank />
                        </tr>
                    ))}
                    <tr className="h-[45px]">
                        <RowHead n={7} />
                        <Cell colSpan={2}>工艺流程<br />指示</Cell>
                        <Cell colSpan={7} />
                        <Cell />
                        <Blank />
                    </tr>
                    {instructions.map((item, i) => (
                        <tr key={item.row} className="h-10">
                            <RowHead n={item.row} selected={item.selected} />
                            {i === 0 && (
                                <Cell rowSpan={instructions.length}>
                                    <span className="font-['Liberation_Mono',monospace] text-[15px]">CAM</span>
                                    <br />
                                    指示
                                </Cell>
                            )}
                            <Cell>{i + 1}</Cell>
                            <Cell colSpan={7} className="relative text-left text-sm leading-4 whitespace-pre text-[#d40000]">
                                <div className="pl-[3px]">{item.body}</div>
                                {item.selected && (
                                    <div className="absolute -inset-[2px] border border-black">
                                        <div className="h-full border border-white">
                                            <div className="h-full border border-black" />
                                        </div>
                                        <div className="absolute -right-[2px] -bottom-[2px] h-[5px] w-[5px] border border-white bg-black" />
                                    </div>
                                )}
                            </Cell>
                            <Cell className="text-left text-base font-normal whitespace-nowrap">
                                {item.link && (
                                    <a href="#fig" className="ml-[2px] text-[#6b1b7d] underline">
                                        图<span className="font-['Liberation_Mono',monospace] text-[13px]">{item.link}</span>
                                    </a>
                                )}
                            </Cell>
                            <Blank />
                        </tr>
                    ))}
                </tbody>
            </table>
            {/* marker arrow pointing at the date format note */}
            <svg width="100" height="110" className="absolute top-[161px] left-[531px]" fill="#ff2424" stroke="#ff2424" strokeLinecap="round" strokeLinejoin="round">
                <path d="M9 10L75 84" strokeWidth="6" />
                <path d="M93 103L81 82 78 81 72 90z" strokeWidth="4" />
            </svg>
        </div>
    );
}

function SheetScroll() {
    return (
        <div className="flex w-[10px] shrink-0 flex-col overflow-hidden border-t border-l border-[#5f83b5] bg-[#7c9cc9]">
            <div className="h-[7px] w-4 border border-[#5f83b5] bg-white" />
            <div className="h-[17px] w-4 pt-[6px] pl-[2px]">
                <svg width="10" height="5" viewBox="0 0 10 5" fill="#3a4f73"><path d="M0 5h10L5 0z" /></svg>
            </div>
            <div className="flex h-[231px] w-4 flex-col items-end justify-center gap-[2px] rounded-sm border border-[#5f83b5] bg-linear-to-r from-[#f0f5fc] to-[#c3d4ea] pr-[4px]">
                <span className="h-px w-2 bg-[#6a7f9f]" />
                <span className="h-px w-2 bg-[#6a7f9f]" />
                <span className="h-px w-2 bg-[#6a7f9f]" />
            </div>
        </div>
    );
}

function ExcelWindow() {
    return (
        <div className="absolute top-[165px] right-0 bottom-0 left-[660px] flex flex-col rounded-tl-md font-['Noto_Sans','Noto_Sans_CJK_SC',sans-serif] shadow-[0_0_10px_2px_rgb(0_0_0/0.7)]">
            <TitleBar />
            <div className="flex min-h-0 flex-1">
                <div className="w-[7px] shrink-0 border-r border-l border-l-[#b9c6c9] border-r-[#3b4a5c] bg-[linear-gradient(180deg,#86aa86_0,#86aa86_45px,#11151b_65px,#555a60_130px,#c9cccf_220px,#0a0d10_226px,#0a0d10_242px,#3f7f45_248px,#3f7f45_332px,#0a0d10_338px)]" />
                <div className="flex min-w-0 flex-1 flex-col">
                    <TabStrip />
                    <Ribbon />
                    <FormulaBar />
                    <div className="flex min-h-0 flex-1">
                        <ClipboardPane />
                        <Worksheet />
                        <SheetScroll />
                    </div>
                </div>
            </div>
            <OfficeButton />
            <div className="absolute right-0 bottom-0 h-1 w-[99px] rounded-tl border-t border-l border-[#8a8a8a] bg-white" />
        </div>
    );
}

function App() {
    return (
        <main className="relative flex h-screen overflow-hidden bg-black">
            <div className="w-2 shrink-0 border-r-2 border-black bg-linear-to-b from-[#333] to-[#111] shadow-[inset_-1px_0_0_#888]" />
            <div className="flex min-w-0 flex-1 flex-col">
                <EditorHeader />
                <div className="flex min-h-0 flex-1">
                    <LayerPanel />
                    <BoardView />
                    <ViewToolbar />
                </div>
                <EditorFooter />
            </div>
            <ExcelWindow />
        </main>
    );
}

export default App;
